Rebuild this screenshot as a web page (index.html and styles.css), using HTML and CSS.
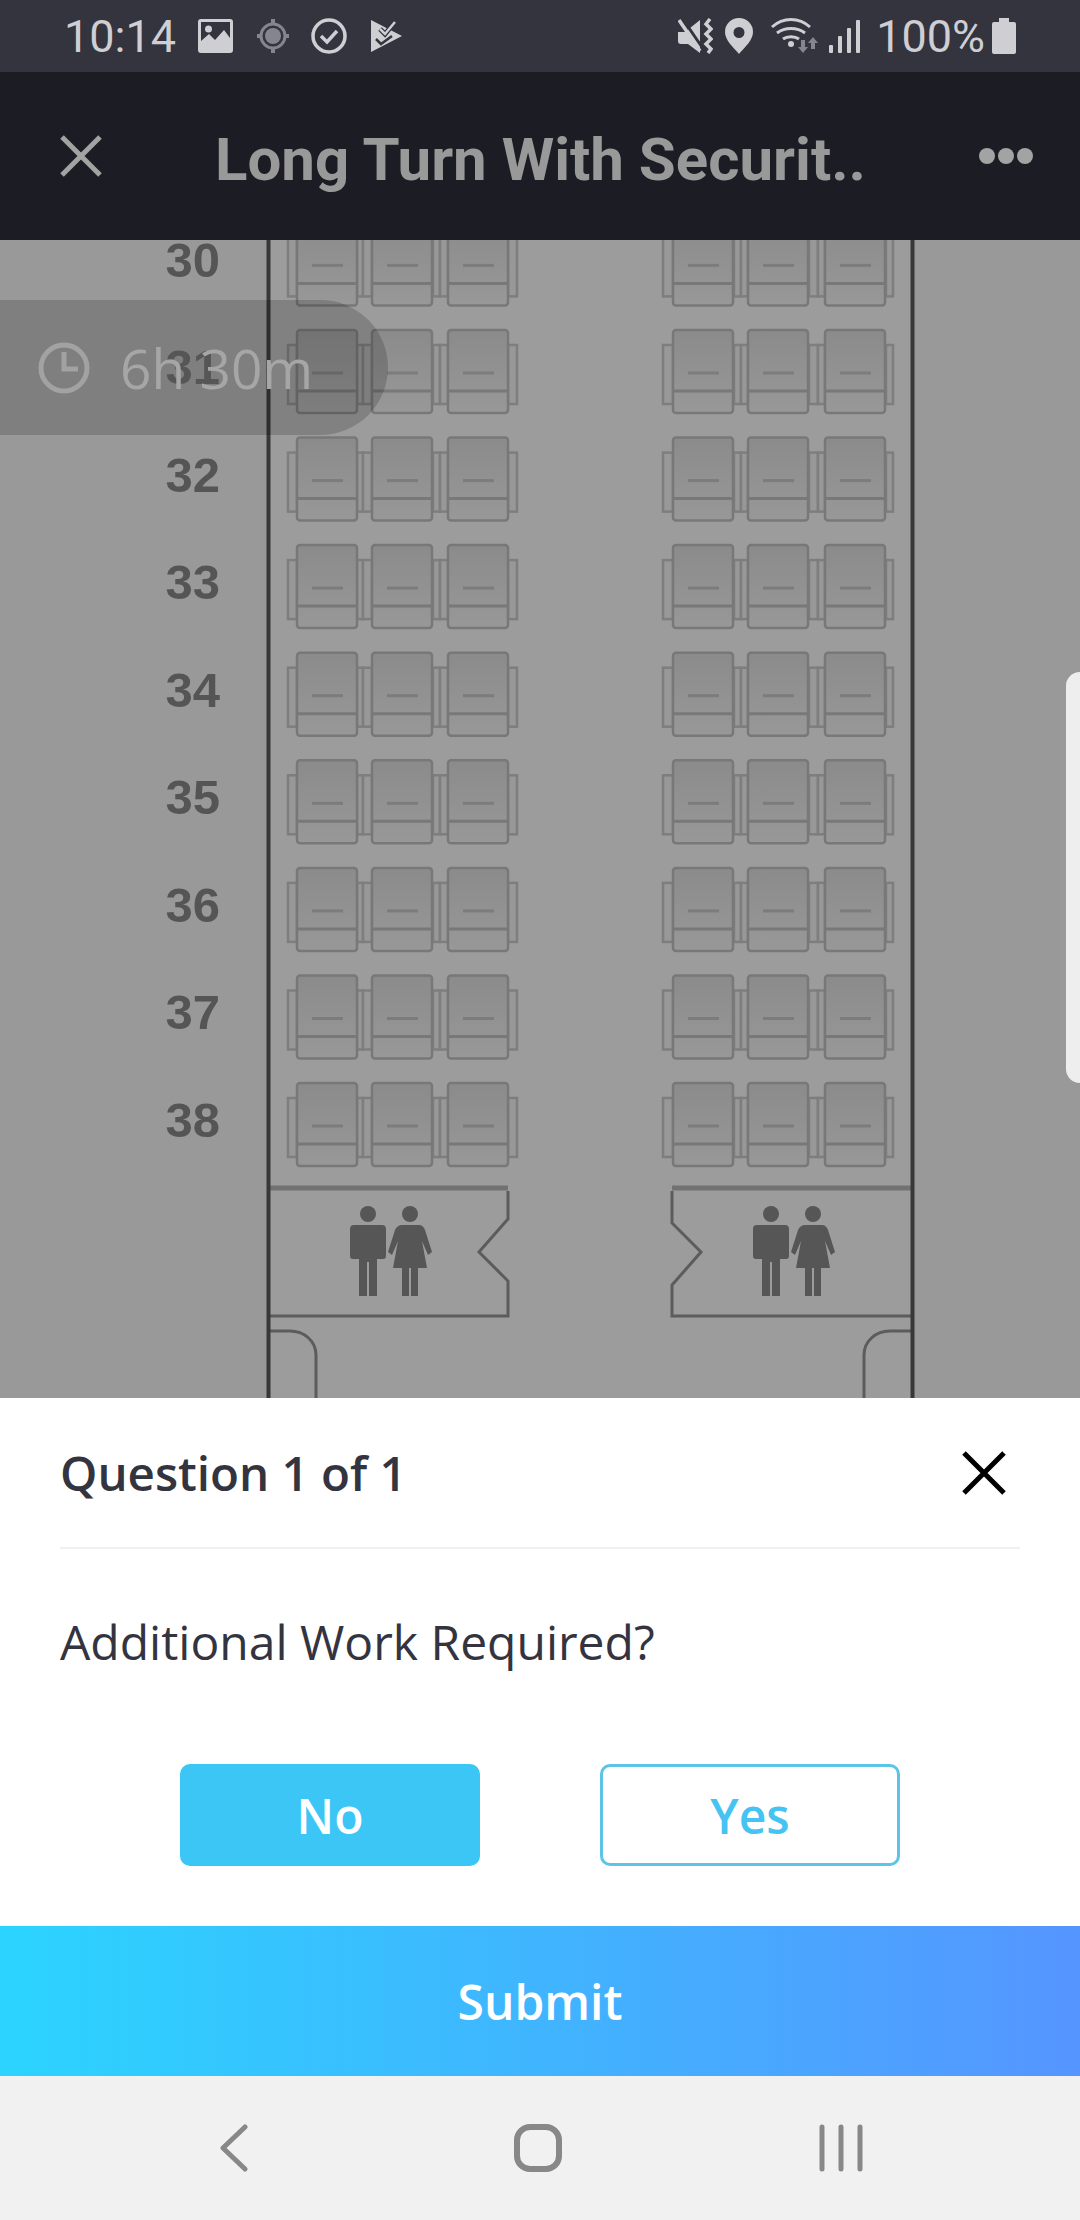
FILE: index.html
```html
<!DOCTYPE html>
<html lang="en">
<head>
    <meta charset="UTF-8">
    <meta name="viewport" content="width=device-width, initial-scale=1.0">
    <title>Long Turn With Security</title>
    <link rel="stylesheet" href="styles.css">
</head>
<body>

<div class="status-bar">
    <div class="status-left">
        <span class="time">10:14</span>
        <svg class="ico" width="35" height="34" viewBox="0 0 35 34">
            <path fill-rule="evenodd" d="M3 0h29a3 3 0 0 1 3 3v28a3 3 0 0 1-3 3H3a3 3 0 0 1-3-3V3a3 3 0 0 1 3-3zM3 3v19l8-7 6 6 9-10 6 8V3z"/>
            <circle cx="10.500" cy="10" r="3.500"/>
        </svg>
        <svg class="ico dim" width="32" height="34" viewBox="0 0 32 34">
            <circle cx="16" cy="17" r="8"/>
            <circle class="ico-ring" cx="16" cy="17" r="12" stroke-width="3"/>
            <path d="M14 0h4v6h-4zM14 28h4v6h-4zM0 15h5v4H0zM27 15h5v4h-5z"/>
        </svg>
        <svg class="ico icon-check" width="36" height="36" viewBox="0 0 36 36">
            <circle class="ico-line" cx="18" cy="18" r="16" stroke-width="3.500"/>
            <path class="ico-line" d="M10 18l6 6 10-11" stroke-width="3.500"/>
        </svg>
        <svg class="ico" width="32" height="34" viewBox="0 0 32 34">
            <path d="M0 1l31 16L0 33z"/>
            <path class="ico-cut" d="M9 10l5 5 10-12" stroke-width="5"/>
            <path class="ico-line" d="M9 10l5 5 10-12" stroke-width="2.500"/>
            <path class="ico-cut" d="M5 20l5 5 11-8" stroke-width="2.500"/>
        </svg>
    </div>
    <div class="status-right">
        <svg class="ico" width="35" height="36" viewBox="0 0 35 36">
            <path d="M0 14h7L22 2v33L10 26H3a3 3 0 0 1-3-3z"/>
            <path class="ico-cut" d="M4 0l22 32" stroke-width="3"/>
            <path class="ico-line" d="M1 2l21 31" stroke-width="3.500"/>
            <path class="ico-line" d="M32 1l-4 5 5 5-5 5 5 5-5 5 5 5-3 4" stroke-width="3.500"/>
        </svg>
        <svg class="ico" width="32" height="36" viewBox="0 0 32 36">
            <path fill-rule="evenodd" d="M16 0a14 14 0 0 1 14 14c0 8-8 15-14 22C10 29 2 22 2 14A14 14 0 0 1 16 0zm0 9a5.500 5.500 0 1 0 0 11 5.500 5.500 0 0 0 0-11z"/>
        </svg>
        <svg class="ico" width="54" height="36" viewBox="0 0 54 36">
            <path class="ico-line" d="M7 9C18-1 34-1 45 9M12 15c8-6 20-6 28 0M18 21c4-3 12-3 16 0" stroke-width="3"/>
            <circle cx="26" cy="26" r="3"/>
            <path class="dim" d="M36 22h4v7h3l-5 6-5-6h3zM48 19l5 6h-3v6h-4v-6h-3z"/>
        </svg>
        <svg class="ico" width="37" height="36" viewBox="0 0 37 36">
            <rect x="0" y="27" width="4" height="8" rx="1"/>
            <rect x="9" y="18" width="4" height="17" rx="1"/>
            <rect x="18" y="10" width="4" height="25" rx="1"/>
            <rect x="27" y="2" width="4" height="33" rx="1"/>
        </svg>
        <span class="pct">100%</span>
        <svg class="ico" width="24" height="36" viewBox="0 0 24 36">
            <path d="M7 0h10v4h5a2 2 0 0 1 2 2v28a2 2 0 0 1-2 2H2a2 2 0 0 1-2-2V6a2 2 0 0 1 2-2h5z"/>
        </svg>
    </div>
</div>

<div class="toolbar">
    <svg class="toolbar-close" width="42" height="42" viewBox="0 0 42 42">
        <path d="M2 2l38 38M40 2L2 40"/>
    </svg>
    <h1 class="toolbar-title">Long Turn With Securit..</h1>
    <svg class="toolbar-more" width="54" height="16" viewBox="0 0 54 16">
        <circle cx="8" cy="8" r="8"/>
        <circle cx="27" cy="8" r="8"/>
        <circle cx="46" cy="8" r="8"/>
    </svg>
</div>

<div class="map">
    <!-- viewBox uses page coordinates so the seat numbers stay easy to check -->
    <svg class="seat-map" width="1080" height="1158" viewBox="0 240 1080 1158">
        <defs>
            <linearGradient id="seat-fill" x1="0" y1="0" x2="0" y2="1">
                <stop offset="0" stop-color="#8b8b8b"/>
                <stop offset="1" stop-color="#989898"/>
            </linearGradient>
            <g id="seat">
                <rect class="seat-back" x="0" y="0" width="60" height="83" rx="3" fill="url(#seat-fill)"/>
                <path class="seat-line" d="M0 61h60"/>
                <path class="seat-dash" d="M15 43h31"/>
            </g>
            <g id="seat-row">
                <rect class="seat-arm" x="288" y="15" width="9" height="59"/>
                <rect class="seat-arm" x="357" y="15" width="6" height="59"/>
                <rect class="seat-arm" x="363" y="15" width="9" height="59"/>
                <rect class="seat-arm" x="433" y="15" width="7" height="59"/>
                <rect class="seat-arm" x="440" y="15" width="8" height="59"/>
                <rect class="seat-arm" x="508" y="15" width="9" height="59"/>
                <use href="#seat" x="297"/>
                <use href="#seat" x="372"/>
                <use href="#seat" x="448"/>
                <rect class="seat-arm" x="663" y="15" width="10" height="59"/>
                <rect class="seat-arm" x="734" y="15" width="7" height="59"/>
                <rect class="seat-arm" x="741" y="15" width="7" height="59"/>
                <rect class="seat-arm" x="809" y="15" width="9" height="59"/>
                <rect class="seat-arm" x="818" y="15" width="7" height="59"/>
                <rect class="seat-arm" x="886" y="15" width="7" height="59"/>
                <use href="#seat" x="673"/>
                <use href="#seat" x="748"/>
                <use href="#seat" x="825"/>
            </g>
            <g id="people">
                <circle cx="368" cy="1214" r="8"/>
                <path d="M354 1225H382a4 4 0 0 1 4 4V1256a3 3 0 0 1-3 3H377V1296H369V1262H367V1296H359V1259H353a3 3 0 0 1-3-3V1229a4 4 0 0 1 4-4z"/>
                <circle cx="410" cy="1214" r="8"/>
                <path d="M402 1225h17c3 0 5 2 6 5l7 22-4 3-6-14 5 27h-9v28h-7v-28h-2v28h-7v-28h-9l5-27-6 14-4-3 7-22c1-3 4-5 7-5z"/>
            </g>
        </defs>

        <rect class="cabin" x="268" y="240" width="644" height="1158"/>

        <use href="#seat-row" y="222.400"/>
        <use href="#seat-row" y="330"/>
        <use href="#seat-row" y="437.600"/>
        <use href="#seat-row" y="545.100"/>
        <use href="#seat-row" y="652.700"/>
        <use href="#seat-row" y="760.300"/>
        <use href="#seat-row" y="867.900"/>
        <use href="#seat-row" y="975.500"/>
        <use href="#seat-row" y="1083"/>

        <text class="row-num" x="220" y="277">30</text>
        <text class="row-num row-num-under" x="220" y="384">31</text>
        <text class="row-num" x="220" y="492">32</text>
        <text class="row-num" x="220" y="599">33</text>
        <text class="row-num" x="220" y="707">34</text>
        <text class="row-num" x="220" y="814">35</text>
        <text class="row-num" x="220" y="922">36</text>
        <text class="row-num" x="220" y="1029">37</text>
        <text class="row-num" x="220" y="1137">38</text>

        <path class="lav-top" d="M268 1188h240M672 1188h240"/>
        <path class="lav" d="M508 1191v28l-29 33 29 29v35H268"/>
        <path class="lav" d="M672 1191v32l29 29-29 33v31h240"/>
        <path class="lav" d="M268 1331h22c14 0 26 10 26 24v43"/>
        <path class="lav" d="M912 1331h-22c-14 0-26 10-26 24v43"/>
        <use class="people" href="#people"/>
        <use class="people" href="#people" x="403"/>

        <path class="wall" d="M268.500 240v1158M912.500 240v1158"/>
    </svg>

    <div class="timer">
        <svg width="52" height="52" viewBox="0 0 52 52">
            <circle cx="26" cy="26" r="23"/>
            <path d="M26 10v17h14"/>
        </svg>
        <span class="timer-text">6h 30m</span>
    </div>
    <div class="scroll-handle"></div>
</div>

<div class="sheet">
    <div class="sheet-head">
        <h2 class="sheet-title">Question 1 of 1</h2>
        <svg class="sheet-close" width="44" height="44" viewBox="0 0 44 44">
            <path d="M2 2l40 40M42 2L2 42"/>
        </svg>
    </div>
    <p class="question">Additional Work Required?</p>
    <div class="answers">
        <button class="answer answer-on" type="button">No</button>
        <button class="answer" type="button">Yes</button>
    </div>
</div>

<button class="submit" type="button">Submit</button>

<div class="nav-bar">
    <svg width="30" height="48" viewBox="0 0 30 48">
        <path d="M26 3L4 24l22 21"/>
    </svg>
    <svg width="48" height="48" viewBox="0 0 48 48">
        <rect x="3" y="3" width="42" height="42" rx="13"/>
    </svg>
    <svg width="44" height="48" viewBox="0 0 44 48">
        <path d="M3 3v42M22 3v42M41 3v42"/>
    </svg>
</div>

</body>
</html>
```

FILE: styles.css
```css
body {
    margin: 0;
    width: 1080px;
    height: 2220px;
    display: flex;
    flex-direction: column;
    font-family: "Open Sans", sans-serif;
    background: #fff;
    overflow: hidden;
}

/* status bar */
.status-bar {
    height: 72px;
    background: #34343f;
    color: #cfcfd3;
    display: flex;
    align-items: center;
    justify-content: space-between;
    padding: 0 64px;
    font-family: Roboto, sans-serif;
    font-size: 45px;
}
.status-left, .status-right {
    display: flex;
    align-items: center;
}
.status-left {
    gap: 24px;
}
.status-right {
    gap: 10px;
}
.time {
    margin-right: -2px;
}
.pct {
    margin-right: -3px;
}
.ico {
    fill: #cfcfd3;
    flex: none;
}
.icon-check {
    margin-left: -2px;
}
.ico.dim, .ico .dim {
    fill: #85858d;
}
.ico-ring {
    fill: none;
    stroke: #85858d;
}
.ico-line {
    fill: none;
    stroke: #cfcfd3;
}
.ico-cut {
    fill: none;
    stroke: #34343f;
}

/* toolbar */
.toolbar {
    height: 168px;
    background: #1c1d24;
    display: flex;
    align-items: center;
    padding: 0 47px 0 60px;
    box-sizing: border-box;
}
.toolbar-close {
    fill: none;
    stroke: #a3a3a3;
    stroke-width: 5;
    flex: none;
}
.toolbar-title {
    flex: 1;
    margin: 0;
    padding-top: 6px;
    text-align: center;
    font-family: Roboto, sans-serif;
    font-size: 60px;
    font-weight: 700;
    color: #999;
    white-space: nowrap;
}
.toolbar-more {
    fill: #a3a3a3;
    flex: none;
}

/* seat map */
.map {
    position: relative;
    height: 1158px;
    background: #999;
    overflow: hidden;
}
.seat-map {
    display: block;
    filter: blur(0.6px);
}
.cabin {
    fill: #9c9c9c;
}
.seat-back {
    stroke: #787878;
    stroke-width: 2.500;
}
.seat-arm {
    fill: #989898;
    stroke: #7e7e7e;
    stroke-width: 2.500;
}
.seat-line {
    stroke: #787878;
    stroke-width: 3;
}
.seat-dash {
    stroke: #7c7c7c;
    stroke-width: 3;
}
.row-num {
    font-family: "Liberation Sans", sans-serif;
    font-size: 49px;
    font-weight: 700;
    fill: #555;
    text-anchor: end;
}
.row-num-under {
    fill: #686868;
}
.lav {
    fill: none;
    stroke: #5c5c5c;
    stroke-width: 3;
}
.lav-top {
    fill: none;
    stroke: #727272;
    stroke-width: 5;
}
.people {
    fill: #565656;
}
.wall {
    fill: none;
    stroke: #383838;
    stroke-width: 4;
}
.timer {
    position: absolute;
    left: 0;
    top: 60px;
    width: 388px;
    height: 135px;
    box-sizing: border-box;
    padding-left: 38px;
    display: flex;
    align-items: center;
    gap: 30px;
    background: rgba(0, 0, 0, 0.17);
    border-radius: 0 68px 68px 0;
}
.timer svg {
    fill: none;
    stroke: #a2a2a2;
    stroke-width: 5;
    flex: none;
}
.timer-text {
    font-size: 55px;
    color: #a6a6a6;
    white-space: nowrap;
}
.scroll-handle {
    position: absolute;
    right: 0;
    top: 432px;
    width: 14px;
    height: 411px;
    background: #eeeeee;
    border-radius: 14px 0 0 14px;
}

/* question sheet */
.sheet {
    height: 528px;
    padding: 0 60px;
    color: #33343f;
}
.sheet-head {
    height: 149px;
    display: flex;
    align-items: center;
    justify-content: space-between;
    border-bottom: 2px solid #f0f0f0;
    padding-right: 14px;
}
.sheet-title {
    margin: 0;
    font-size: 47.500px;
    font-weight: 600;
}
.sheet-close {
    fill: none;
    stroke: #000;
    stroke-width: 5;
}
.question {
    margin: 60px 0 0;
    font-size: 48px;
    line-height: 66px;
}
.answers {
    display: flex;
    justify-content: center;
    gap: 120px;
    margin-top: 89px;
}
.answer {
    width: 300px;
    height: 102px;
    font-family: inherit;
    font-size: 48px;
    font-weight: 600;
    color: #45c3f2;
    background: #fff;
    border: 3px solid #5cc4e8;
    border-radius: 10px;
    padding: 0;
}
.answer-on {
    color: #fff;
    background: #3cc6f5;
    border-color: #3cc6f5;
}

.submit {
    height: 150px;
    border: none;
    padding: 0;
    font-family: inherit;
    font-size: 48px;
    font-weight: 600;
    color: #fff;
    background: linear-gradient(90deg, #2bd4fe, #5595ff);
}

/* android nav */
.nav-bar {
    height: 144px;
    background: #f1f1f1;
    display: flex;
    align-items: center;
    padding-left: 219px;
}
.nav-bar svg {
    fill: none;
    stroke: #888;
    stroke-width: 5;
    stroke-linecap: round;
    stroke-linejoin: round;
    flex: none;
}
.nav-bar svg:nth-child(2) {
    margin-left: 265px;
    stroke-width: 6;
}
.nav-bar svg:nth-child(3) {
    margin-left: 257px;
}
```
